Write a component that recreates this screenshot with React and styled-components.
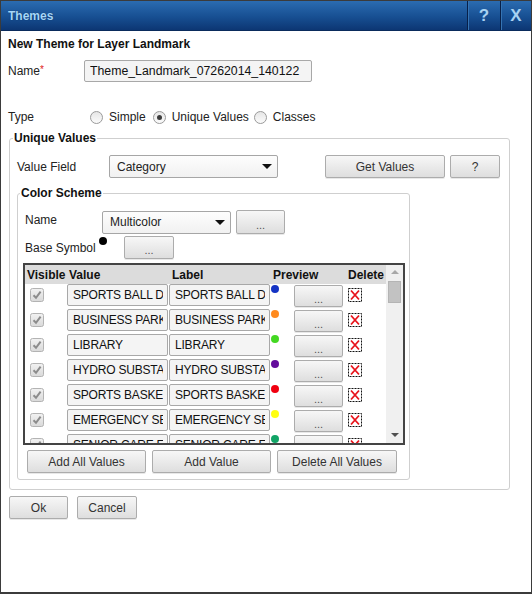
import styled, { createGlobalStyle } from "styled-components";

const GlobalStyle = createGlobalStyle`
  html, body {
    margin: 0;
    padding: 0;
    background: #fff;
  }
  body {
    font-family: "Liberation Sans", Arial, sans-serif;
    font-size: 12px;
    color: #111;
  }
  * {
    box-sizing: border-box;
  }
`;

const Window = styled.div`
  width: 532px;
  height: 594px;
  border: 1px solid #3b3b3b;
  border-bottom-width: 2px;
  background: #fff;
  display: flex;
  flex-direction: column;
`;

const TitleBar = styled.div`
  height: 30px;
  flex: none;
  display: flex;
  align-items: stretch;
  background: linear-gradient(#2b6cb1, #174f92 55%, #0c3673);
  border-bottom: 1px solid #0a2b5c;
`;

const Title = styled.div`
  flex: 1;
  display: flex;
  align-items: center;
  padding-left: 7px;
  font-weight: bold;
  font-size: 12px;
  color: #a4d6f8;
  text-shadow: 0 0 1px #0a2a5a;
`;

const TitleButton = styled.div`
  width: ${(p) => p.$w}px;
  display: flex;
  align-items: center;
  justify-content: center;
  font-weight: bold;
  font-size: 17px;
  color: #a8d2f2;
  border-left: 1px solid #072049;
  box-shadow: inset 1px 0 0 #3573b3;
`;

const Body = styled.div`
  flex: 1;
  padding: 6px 7px 0;
  display: flex;
  flex-direction: column;
  align-items: flex-start;
`;

const Heading = styled.div`
  font-weight: bold;
  line-height: 14px;
`;

const Row = styled.div`
  display: flex;
  align-items: center;
  margin-top: ${(p) => p.$mt || 0}px;
  min-height: ${(p) => p.$h || 20}px;
`;

const Label = styled.div`
  width: ${(p) => p.$w}px;
  flex: none;
  position: relative;
  color: #222;
  padding-bottom: ${(p) => p.$raise || 0}px;
`;

const Req = styled.span`
  color: #e02020;
  font-size: 10px;
  vertical-align: top;
`;

const TextInput = styled.input`
  width: ${(p) => p.$w}px;
  height: 22px;
  border: 1px solid #a8a8a8;
  border-radius: 2px;
  background: #f4f4f4;
  padding: 0 5px;
  font-family: "Liberation Sans", Arial, sans-serif;
  font-size: 12.3px;
  color: #111;
  outline: none;
  flex: none;
`;

const CellInput = styled(TextInput)`
  padding: 0 4px 0 5px;
  font-size: 12px;
  letter-spacing: -0.2px;
`;

const Radio = styled.span`
  width: 13px;
  height: 13px;
  border-radius: 50%;
  border: 1px solid #9a9a9a;
  background: linear-gradient(#e6e6e6, #fbfbfb);
  display: inline-flex;
  align-items: center;
  justify-content: center;
  margin-left: ${(p) => p.$ml}px;
  margin-right: 6px;
  &::after {
    content: "";
    width: 5px;
    height: 5px;
    border-radius: 50%;
    background: ${(p) => (p.$on ? "#3d3d3d" : "transparent")};
  }
`;

const RadioText = styled.span`
  color: #222;
`;

const Fieldset = styled.fieldset`
  margin: ${(p) => p.$m};
  width: ${(p) => p.$w}px;
  border: 1px solid #cfcfcf;
  border-radius: 3px;
  padding: 10px ${(p) => p.$pr}px ${(p) => p.$pb}px 7px;
  min-width: 0;
`;

const Legend = styled.legend`
  font-weight: bold;
  line-height: 14px;
  padding: 0 1px;
  margin-left: ${(p) => p.$ml}px;
`;

const Select = styled.div`
  width: ${(p) => p.$w}px;
  height: 23px;
  flex: none;
  border: 1px solid #a6a6a6;
  border-radius: 2px;
  background: linear-gradient(#fdfdfd, #f1f1f1);
  display: flex;
  align-items: center;
  justify-content: space-between;
  padding: 0 5px 0 7px;
  color: #222;
  &::after {
    content: "";
    border-left: 5px solid transparent;
    border-right: 5px solid transparent;
    border-top: 5px solid #111;
  }
`;

const Button = styled.button`
  width: ${(p) => p.$w}px;
  height: ${(p) => p.$h || 23}px;
  margin-left: ${(p) => p.$ml || 0}px;
  flex: none;
  border: 1px solid #acacac;
  border-radius: 2px;
  background: linear-gradient(#f7f7f7, #dedede);
  font-family: "Liberation Sans", Arial, sans-serif;
  font-size: 12px;
  color: #333;
  padding: 0;
  box-shadow: 0 1px 0 #e8e8e8;
`;

const Dots = styled(Button)`
  font-size: 11px;
  color: #555;
  padding-top: 5px;
`;

const Symbol = styled.span`
  width: 8px;
  height: 8px;
  border-radius: 50%;
  background: ${(p) => p.$c};
  display: block;
  flex: none;
`;

const BaseDot = styled(Symbol)`
  position: absolute;
  left: 74px;
  top: -4px;
`;

const Grid = styled.div`
  margin: 4px 0 0 -2px;
  width: 382px;
  height: 182px;
  border: 2px solid #444;
  display: flex;
`;

const Table = styled.div`
  flex: 1;
  overflow: hidden;
`;

const cols = "42px 102px 102px 75px 40px";

const HeaderRow = styled.div`
  display: grid;
  grid-template-columns: ${cols};
  height: 19px;
  align-items: center;
  background: #dcdcdc;
  font-weight: bold;
  color: #111;
`;

const HeadCell = styled.div`
  padding-left: ${(p) => p.$pl ?? 2}px;
`;

const DataRow = styled.div`
  display: grid;
  grid-template-columns: ${cols};
  height: 25px;
  align-items: start;
`;

const CheckCell = styled.div`
  padding: 4px 0 0 5px;
  display: flex;
`;

const PreviewCell = styled.div`
  display: flex;
  align-items: flex-start;
  padding-top: 1px;
  gap: 15px;
`;

const DeleteCell = styled.div`
  padding: 4px 0 0 2px;
  display: flex;
`;

const Scrollbar = styled.div`
  width: 17px;
  flex: none;
  background: #f0f0f0;
  display: flex;
  flex-direction: column;
  align-items: center;
  padding-top: 5px;
`;

const Arrow = styled.span`
  border-left: 4px solid transparent;
  border-right: 4px solid transparent;
  ${(p) =>
    p.$up
      ? "border-bottom: 4px solid #a8a8a8;"
      : "border-top: 4px solid #505050; margin-top: auto; margin-bottom: 6px;"}
`;

const Thumb = styled.div`
  width: 13px;
  height: 22px;
  margin-top: 7px;
  background: #c2c2c2;
  border: 1px solid #b4b4b4;
`;

const ButtonRow = styled.div`
  display: flex;
  gap: 6px;
  margin: 5px 0 0 2px;
`;

const Footer = styled.div`
  display: flex;
  gap: 9px;
  margin: 6px 0 0 1px;
`;

const Check = () => (
  <svg width="14" height="14" viewBox="0 0 14 14">
    <defs>
      <linearGradient id="cb" x1="0" y1="0" x2="0" y2="1">
        <stop offset="0" stopColor="#f2f2f2" />
        <stop offset="1" stopColor="#d9d9d9" />
      </linearGradient>
    </defs>
    <rect x="0.5" y="0.5" width="13" height="13" rx="2" fill="url(#cb)" stroke="#b3b3b3" />
    <path d="M3.5 7.2 L6 9.8 L10.6 3.6" fill="none" stroke="#8c8c8c" strokeWidth="2" />
  </svg>
);

const DeleteIcon = () => (
  <svg width="14" height="14" viewBox="0 0 14 14">
    <rect x="0.5" y="0.5" width="13" height="13" fill="#fff" stroke="#111" strokeDasharray="2 1" />
    <path d="M3 2.5 L11 11.5 M11 2.5 L3 11.5" stroke="#e8141c" strokeWidth="1.8" />
  </svg>
);

const rows = [
  ["SPORTS BALL DIAMOND", "#1433c4"],
  ["BUSINESS PARK", "#ff8a1e"],
  ["LIBRARY", "#44d822"],
  ["HYDRO SUBSTATION", "#640c9c"],
  ["SPORTS BASKETBALL", "#f00010"],
  ["EMERGENCY SERVICES", "#ffff10"],
  ["SENIOR CARE FACILITY", "#12a466"],
];

const App = () => {
  return (
    <>
      <GlobalStyle />
      <Window>
        <TitleBar>
          <Title>Themes</Title>
          <TitleButton $w={33}>?</TitleButton>
          <TitleButton $w={31}>X</TitleButton>
        </TitleBar>
        <Body>
          <Heading>New Theme for Layer Landmark</Heading>
          <Row $mt={9} $h={22}>
            <Label $w={76}>
              Name<Req>*</Req>
            </Label>
            <TextInput $w={228} readOnly value="Theme_Landmark_07262014_140122" />
          </Row>
          <Row $mt={25}>
            <Label $w={76}>Type</Label>
            <Radio $ml={6} />
            <RadioText>Simple</RadioText>
            <Radio $ml={7} $on />
            <RadioText>Unique Values</RadioText>
            <Radio $ml={5} />
            <RadioText>Classes</RadioText>
          </Row>

          <Fieldset $m="4px 0 0 1px" $w={501} $pr={8} $pb={9}>
            <Legend $ml={-4}>Unique Values</Legend>
            <Row $h={23}>
              <Label $w={92}>Value Field</Label>
              <Select $w={169}>Category</Select>
              <Button $w={120} $ml={47}>Get Values</Button>
              <Button $w={50} $ml={5}>?</Button>
            </Row>

            <Fieldset $m="8px 0 0 0" $w={393} $pr={5} $pb={6}>
              <Legend $ml={-5}>Color Scheme</Legend>
              <Row $h={24}>
                <Label $w={77} $raise={5}>Name</Label>
                <Select $w={129}>Multicolor</Select>
                <Dots $w={49} $h={24} $ml={5}>...</Dots>
              </Row>
              <Row $mt={2} $h={23}>
                <Label $w={99}>
                  Base Symbol
                  <BaseDot $c="#000" />
                </Label>
                <Dots $w={50}>...</Dots>
              </Row>

              <Grid>
                <Table>
                  <HeaderRow>
                    <HeadCell>Visible</HeadCell>
                    <HeadCell>Value</HeadCell>
                    <HeadCell $pl={3}>Label</HeadCell>
                    <HeadCell>Preview</HeadCell>
                    <HeadCell>Delete</HeadCell>
                  </HeaderRow>
                  {rows.map(([name, color]) => (
                    <DataRow key={name}>
                      <CheckCell>
                        <Check />
                      </CheckCell>
                      <CellInput $w={101} readOnly value={name} />
                      <CellInput $w={101} readOnly value={name} />
                      <PreviewCell>
                        <Symbol $c={color} />
                        <Dots $w={49} $h={22}>...</Dots>
                      </PreviewCell>
                      <DeleteCell>
                        <DeleteIcon />
                      </DeleteCell>
                    </DataRow>
                  ))}
                </Table>
                <Scrollbar>
                  <Arrow $up />
                  <Thumb />
                  <Arrow />
                </Scrollbar>
              </Grid>

              <ButtonRow>
                <Button $w={119}>Add All Values</Button>
                <Button $w={119}>Add Value</Button>
                <Button $w={120}>Delete All Values</Button>
              </ButtonRow>
            </Fieldset>
          </Fieldset>

          <Footer>
            <Button $w={59}>Ok</Button>
            <Button $w={60}>Cancel</Button>
          </Footer>
        </Body>
      </Window>
    </>
  );
};

export default App;
